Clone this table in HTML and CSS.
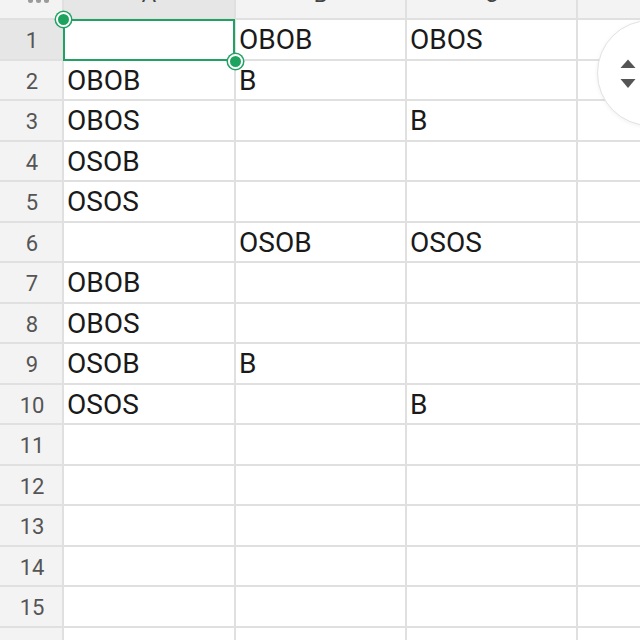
FILE: index.html
```html
<!DOCTYPE html>
<html>
<head>
<meta charset="utf-8">
<link rel="stylesheet" href="styles.css">
</head>
<body>
<div class="sheet">
  <div class="grid">
    <div class="corner"><span class="dots"><i></i><i></i><i></i></span></div>
    <div class="colhead sel">A</div>
    <div class="colhead">B</div>
    <div class="colhead">C</div>
    <div class="colhead"></div>

    <div class="rowhead sel">1</div><div class="cell"></div><div class="cell">OBOB</div><div class="cell">OBOS</div><div class="cell"></div>
    <div class="rowhead">2</div><div class="cell">OBOB</div><div class="cell">B</div><div class="cell"></div><div class="cell"></div>
    <div class="rowhead">3</div><div class="cell">OBOS</div><div class="cell"></div><div class="cell">B</div><div class="cell"></div>
    <div class="rowhead">4</div><div class="cell">OSOB</div><div class="cell"></div><div class="cell"></div><div class="cell"></div>
    <div class="rowhead">5</div><div class="cell">OSOS</div><div class="cell"></div><div class="cell"></div><div class="cell"></div>
    <div class="rowhead">6</div><div class="cell"></div><div class="cell">OSOB</div><div class="cell">OSOS</div><div class="cell"></div>
    <div class="rowhead">7</div><div class="cell">OBOB</div><div class="cell"></div><div class="cell"></div><div class="cell"></div>
    <div class="rowhead">8</div><div class="cell">OBOS</div><div class="cell"></div><div class="cell"></div><div class="cell"></div>
    <div class="rowhead">9</div><div class="cell">OSOB</div><div class="cell">B</div><div class="cell"></div><div class="cell"></div>
    <div class="rowhead">10</div><div class="cell">OSOS</div><div class="cell"></div><div class="cell">B</div><div class="cell"></div>
    <div class="rowhead">11</div><div class="cell"></div><div class="cell"></div><div class="cell"></div><div class="cell"></div>
    <div class="rowhead">12</div><div class="cell"></div><div class="cell"></div><div class="cell"></div><div class="cell"></div>
    <div class="rowhead">13</div><div class="cell"></div><div class="cell"></div><div class="cell"></div><div class="cell"></div>
    <div class="rowhead">14</div><div class="cell"></div><div class="cell"></div><div class="cell"></div><div class="cell"></div>
    <div class="rowhead">15</div><div class="cell"></div><div class="cell"></div><div class="cell"></div><div class="cell"></div>
    <div class="rowhead">16</div><div class="cell"></div><div class="cell"></div><div class="cell"></div><div class="cell"></div>
  </div>

  <div class="selection">
    <span class="handle tl"></span>
    <span class="handle br"></span>
  </div>

  <div class="scroller">
    <svg class="arrows" width="16" height="30" viewBox="0 0 16 30">
      <path d="M0.5 9 L8 0.5 L15.5 9 Z" fill="#555555"/>
      <path d="M0.5 20 L15.5 20 L8 29 Z" fill="#555555"/>
    </svg>
  </div>
</div>
</body>
</html>
```

FILE: styles.css
```css
html, body {
  margin: 0;
  padding: 0;
  width: 640px;
  height: 640px;
  overflow: hidden;
  background: #ffffff;
  font-family: Roboto, "Liberation Sans", sans-serif;
}

.sheet {
  position: relative;
  width: 640px;
  height: 640px;
  overflow: hidden;
}

.grid {
  display: grid;
  grid-template-columns: 62px 170px 169px 169px 1fr;
  grid-template-rows: 18px repeat(16, 38.5px);
  gap: 2px;
  background: #e0e0e0;
  width: 640px;
}

.corner {
  background: #f3f3f3;
  display: flex;
  justify-content: center;
  align-items: flex-start;
  padding-left: 14px;
}

.dots {
  display: flex;
  gap: 3px;
  margin-top: -2px;
}

.dots i {
  display: block;
  width: 5px;
  height: 5px;
  border-radius: 50%;
  background: #9a9a9a;
}

.colhead {
  background: #f3f3f3;
  color: #444444;
  font-size: 22px;
  line-height: 22px;
  display: flex;
  justify-content: center;
  align-items: flex-end;
  padding-bottom: 12px;
  overflow: visible;
}

.colhead.sel {
  background: #e6e6e6;
}

.rowhead {
  background: #f3f3f3;
  color: #555555;
  font-size: 22px;
  display: flex;
  align-items: center;
  justify-content: center;
  padding-left: 2px;
  padding-top: 3px;
}

.rowhead.sel {
  background: #e6e6e6;
}

.cell {
  background: #ffffff;
  color: #1a1a1a;
  font-size: 28px;
  display: flex;
  align-items: center;
  padding-left: 3px;
  padding-top: 1px;
  white-space: nowrap;
}

.selection {
  position: absolute;
  left: 63px;
  top: 19px;
  width: 168px;
  height: 38px;
  border: 2px solid #22a262;
}

.handle {
  position: absolute;
  width: 11px;
  height: 11px;
  border-radius: 50%;
  background: #1ea35f;
  border: 2px solid #ffffff;
  box-shadow: 0 0 0 1.5px #22a262;
}

.handle.tl {
  left: -9.5px;
  top: -9.5px;
}

.handle.br {
  right: -9.5px;
  bottom: -9.5px;
}

.scroller {
  position: absolute;
  left: 597px;
  top: 20px;
  width: 110px;
  height: 106px;
  border-radius: 53px;
  background: #ffffff;
  border: 1px solid #e2e2e2;
  box-shadow: 0 1px 4px rgba(0, 0, 0, 0.06);
  display: flex;
  align-items: center;
  padding-left: 22px;
  box-sizing: border-box;
}

.arrows {
  display: block;
  margin-top: 1px;
}
```
